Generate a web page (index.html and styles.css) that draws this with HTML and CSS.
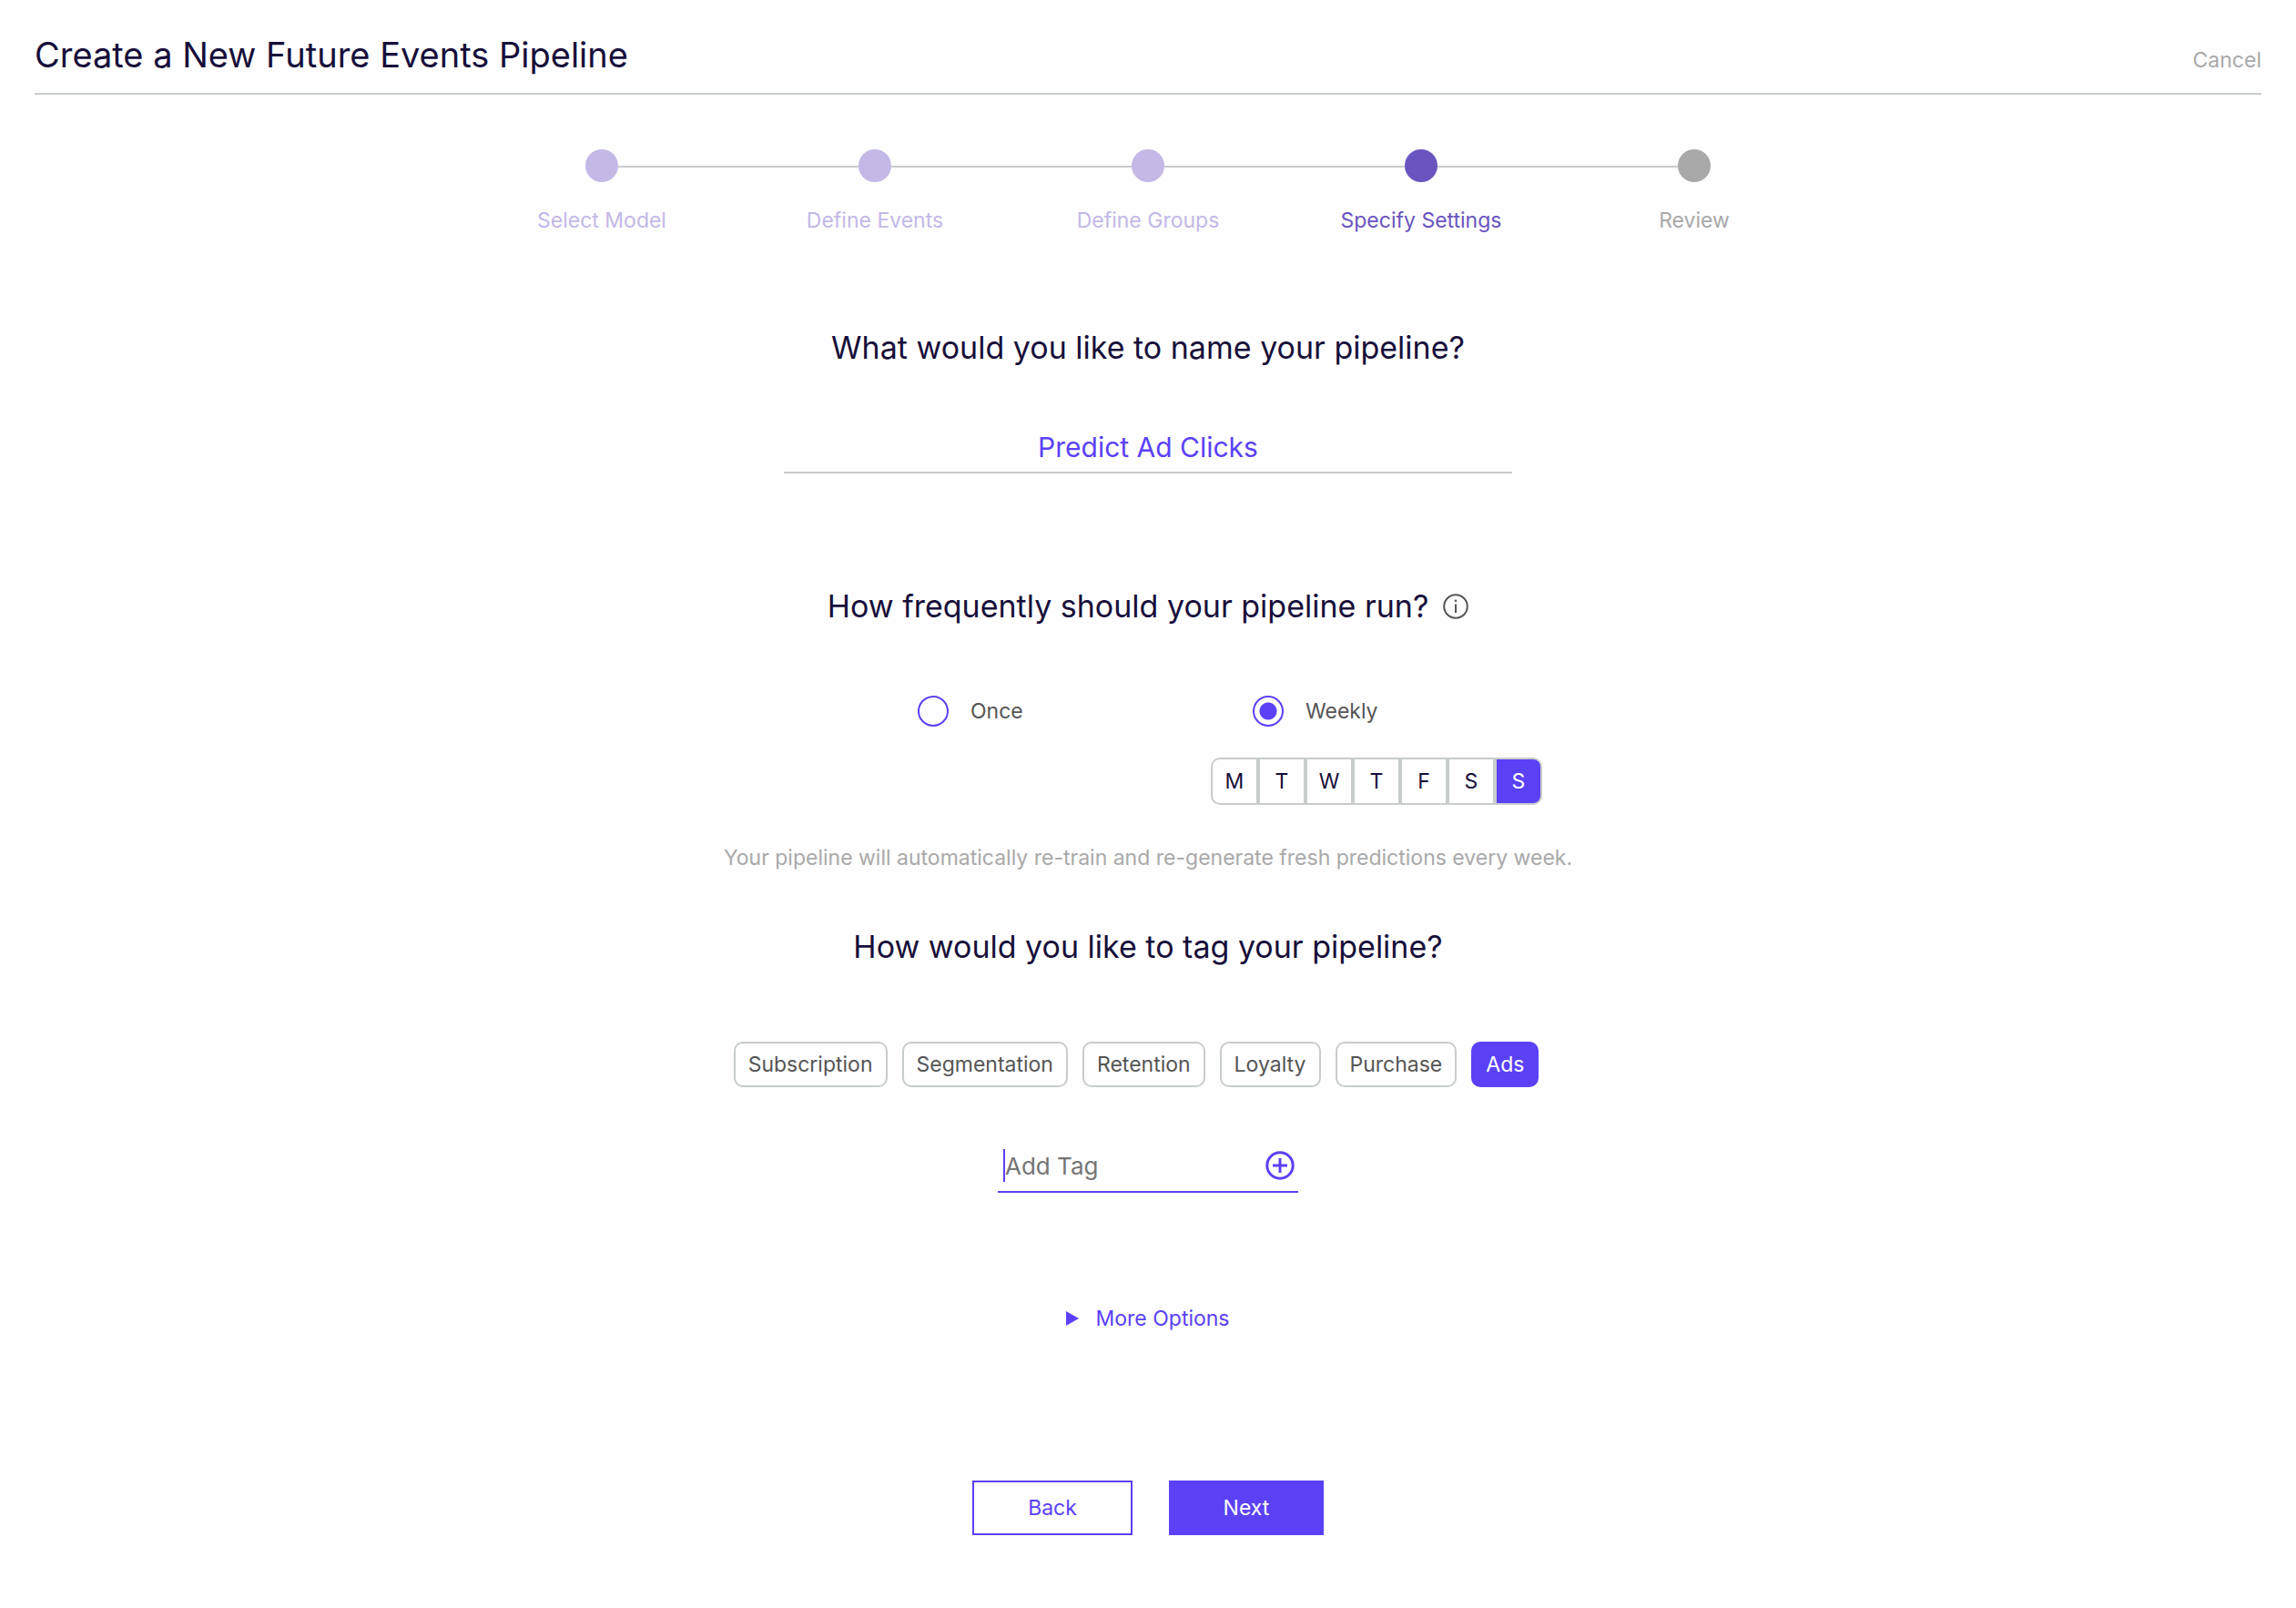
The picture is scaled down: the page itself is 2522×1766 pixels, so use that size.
FILE: index.html
```
<!DOCTYPE html>
<html lang="en">
  <head>
    <meta charset="UTF-8" />
    <meta name="viewport" content="width=device-width, initial-scale=1.0" />
    <title>Create a New Future Events Pipeline</title>
    <link rel="stylesheet" href="styles.css">
  </head>
  <body>
    <header class="header">
      <h1>Create a New Future Events Pipeline</h1>
      <a href="#" class="cancel">Cancel</a>
    </header>

    <ol class="steps">
      <li class="step done">Select Model</li>
      <li class="step done">Define Events</li>
      <li class="step done">Define Groups</li>
      <li class="step active" aria-current="step">Specify Settings</li>
      <li class="step">Review</li>
    </ol>

    <form class="settings">
      <h2><label for="pipelineName">What would you like to name your pipeline?</label></h2>
      <input type="text" id="pipelineName" class="name-input" value="Predict Ad Clicks" />

      <h2 class="frequency-title">
        How frequently should your pipeline run?
        <svg class="info" viewBox="0 0 28 28" role="img" aria-label="More info">
          <circle cx="14" cy="14" r="12.8" />
          <path d="M14 11.5V21" />
          <circle class="dot" cx="14" cy="7.8" r="1.3" />
        </svg>
      </h2>
      <div class="frequency">
        <div class="option">
          <input type="radio" name="frequency" id="once" />
          <label for="once">Once</label>
        </div>
        <div class="option">
          <input type="radio" name="frequency" id="weekly" checked />
          <label for="weekly">Weekly</label>
        </div>
        <div class="days">
          <button type="button">M</button>
          <button type="button">T</button>
          <button type="button">W</button>
          <button type="button">T</button>
          <button type="button">F</button>
          <button type="button">S</button>
          <button type="button" class="selected">S</button>
        </div>
      </div>
      <p class="note">Your pipeline will automatically re-train and re-generate fresh predictions every week.</p>

      <h2 class="tag-title">How would you like to tag your pipeline?</h2>
      <div class="tags">
        <button type="button">Subscription</button>
        <button type="button">Segmentation</button>
        <button type="button">Retention</button>
        <button type="button">Loyalty</button>
        <button type="button">Purchase</button>
        <button type="button" class="selected">Ads</button>
      </div>
      <div class="add-tag">
        <input type="text" placeholder="Add Tag" aria-label="Add Tag" />
        <button type="button" aria-label="Add">
          <svg viewBox="0 0 32 32">
            <circle cx="16" cy="16" r="14.2" />
            <path d="M16 8v16M8 16h16" />
          </svg>
        </button>
      </div>

      <button type="button" class="more">
        <svg viewBox="0 0 14 16"><path d="M0 0L14 8L0 16Z" /></svg>
        More Options
      </button>

      <div class="actions">
        <button type="button" class="back">Back</button>
        <button type="submit" class="next">Next</button>
      </div>
    </form>
  </body>
</html>
```

FILE: styles.css
```
* {
  box-sizing: border-box;
}
body {
  margin: 0;
  padding: 36px 38px;
  background: #fefefe;
  color: #170f3a;
  font-family: "Inter", sans-serif;
  font-size: 23px;
  line-height: 32px;
}
h1,
h2,
p,
ol {
  margin: 0;
  padding: 0;
  font-weight: 400;
}
input,
button {
  margin: 0;
  padding: 0;
  border: none;
  background: none;
  color: inherit;
  font: inherit;
  outline: none;
}
button {
  cursor: pointer;
}

.header {
  display: flex;
  justify-content: space-between;
  align-items: baseline;
  padding-bottom: 18px;
  border-bottom: 2px solid #c8cccc;
}
h1 {
  font-size: 38px;
  line-height: 48px;
}
.cancel {
  color: #a9a9a9;
  text-decoration: none;
}

.steps {
  display: flex;
  max-width: 1500px;
  margin: 60px auto 0;
  list-style: none;
}
.step {
  flex: 1;
  display: flex;
  flex-direction: column;
  align-items: center;
  gap: 26px;
  position: relative;
  color: #a9a9a9;
}
.step::before {
  content: "";
  width: 36px;
  height: 36px;
  border-radius: 50%;
  background: currentColor;
}
/* line to the next step */
.step:not(:last-child)::after {
  content: "";
  position: absolute;
  top: 18px;
  left: calc(50% + 18px);
  width: calc(100% - 36px);
  height: 2px;
  background: #c8cccc;
}
.done {
  color: #c3b8e6;
}
.active {
  color: #6a54c0;
}

.settings {
  display: flex;
  flex-direction: column;
  align-items: center;
  margin-top: 102px;
}
h2 {
  font-size: 34px;
  line-height: 44px;
}
.name-input {
  width: 100%;
  max-width: 800px;
  height: 50px;
  margin-top: 66px;
  padding-bottom: 6px;
  border-bottom: 2px solid #c8cccc;
  color: #5b41f5;
  font-size: 30px;
  text-align: center;
}

.frequency-title {
  display: flex;
  align-items: center;
  gap: 16px;
  margin-top: 124px;
}
.info {
  width: 28px;
  height: 28px;
  fill: none;
  stroke: #555;
  stroke-width: 2;
}
.info .dot {
  fill: #555;
  stroke: none;
}
.frequency {
  display: grid;
  grid-template-columns: 368px 364px;
  row-gap: 34px;
  margin-top: 76px;
  padding-left: 134px;
}
.option {
  display: flex;
  align-items: center;
  gap: 24px;
  height: 34px;
  padding-left: 46px;
  color: #555;
}
.option input {
  appearance: none;
  width: 34px;
  height: 34px;
  border: 2px solid #5b41f5;
  border-radius: 50%;
}
.option input:checked {
  background: radial-gradient(#5b41f5 9px, transparent 10px);
}
.days {
  grid-column: 2;
  display: flex;
}
.days button {
  flex: 1;
  height: 52px;
  border: 2px solid #c8cccc;
}
.days button:first-child {
  border-radius: 10px 0 0 10px;
}
.days button:last-child {
  border-radius: 0 10px 10px 0;
}
.days .selected {
  background: #5b41f5;
  color: #fff;
}
.note {
  margin-top: 42px;
  color: #a9a9a9;
}

.tag-title {
  margin-top: 60px;
}
.tags {
  display: flex;
  gap: 16px;
  margin-top: 82px;
  padding-right: 26px;
}
.tags button {
  height: 50px;
  padding: 0 14px;
  border: 2px solid #c8cccc;
  border-radius: 10px;
  color: #555;
}
.tags .selected {
  border-color: #5b41f5;
  background: #5b41f5;
  color: #fff;
}
.add-tag {
  display: flex;
  align-items: center;
  width: 330px;
  height: 58px;
  margin-top: 58px;
  padding: 0 4px 0 6px;
  border-bottom: 2px solid #5b41f5;
}
.add-tag input {
  flex: 1;
  min-width: 0;
  height: 36px;
  border-left: 2px solid #5b41f5;
  font-size: 26px;
}
.add-tag input::placeholder {
  color: #757575;
}
.add-tag button,
.add-tag svg {
  display: block;
  width: 32px;
  height: 32px;
}
.add-tag svg {
  fill: none;
  stroke: #5b41f5;
  stroke-width: 3;
}

.more {
  display: flex;
  align-items: center;
  gap: 18px;
  margin-top: 122px;
  color: #5b41f5;
}
.more svg {
  width: 14px;
  height: 16px;
  fill: currentColor;
}
.actions {
  display: flex;
  gap: 40px;
  margin-top: 162px;
}
.actions button {
  height: 60px;
  border: 2px solid #5b41f5;
}
.back {
  width: 176px;
  color: #5b41f5;
}
.next {
  width: 170px;
  background: #5b41f5;
  color: #fff;
}
```
